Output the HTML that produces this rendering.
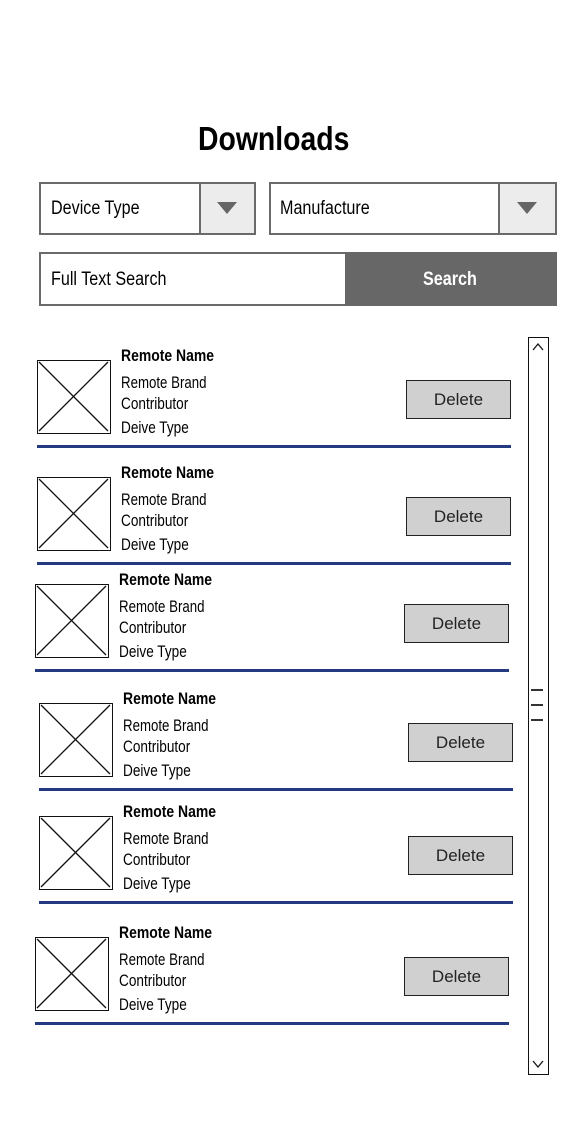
<!DOCTYPE html>
<html><head><meta charset="utf-8"><style>
*{margin:0;padding:0;box-sizing:border-box}
body{width:588px;height:1146px;background:#fff;position:relative;overflow:hidden;font-family:"Liberation Sans",sans-serif;color:#000}
.a{position:absolute}
.t{position:absolute;white-space:nowrap;transform-origin:0 0}
.img{position:absolute;width:74px;height:74px;border:1.5px solid #111}
.btn{position:absolute;width:105px;height:39px;border:1.5px solid #222;background:#d0d0d0;font-size:17px;text-align:center;line-height:37px;color:#222}
.line{position:absolute;width:474px;height:3px;background:#243a80}
</style></head><body>
<div class="t" style="left:198px;top:120px;font-size:33px;font-weight:bold;transform:scaleX(0.86)">Downloads</div>

<div class="a" style="left:39px;top:182px;width:217px;height:53px;border:2.5px solid #6a6a6a"></div>
<div class="a" style="left:199px;top:182px;width:57px;height:53px;border:2.5px solid #6a6a6a;background:#ececec"></div>
<div class="a" style="left:217px;top:202px;width:0;height:0;border-left:10px solid transparent;border-right:10px solid transparent;border-top:12px solid #666"></div>
<div class="t" style="left:51px;top:198px;font-size:19px;transform:scaleX(0.85)">Device Type</div>

<div class="a" style="left:269px;top:182px;width:288px;height:53px;border:2.5px solid #6a6a6a"></div>
<div class="a" style="left:498px;top:182px;width:59px;height:53px;border:2.5px solid #6a6a6a;background:#ececec"></div>
<div class="a" style="left:517px;top:202px;width:0;height:0;border-left:10px solid transparent;border-right:10px solid transparent;border-top:12px solid #666"></div>
<div class="t" style="left:280px;top:198px;font-size:19px;transform:scaleX(0.85)">Manufacture</div>

<div class="a" style="left:39px;top:252px;width:308px;height:54px;border:2.5px solid #6a6a6a"></div>
<div class="a" style="left:345px;top:252px;width:212px;height:54px;background:#676767"></div>
<div class="t" style="left:51px;top:269px;font-size:19px;transform:scaleX(0.85)">Full Text Search</div>
<div class="t" style="left:423px;top:269px;font-size:19px;font-weight:bold;color:#fff;transform:scaleX(0.85)">Search</div>

<div class="a" style="left:528px;top:337px;width:21px;height:738px;border:1.5px solid #111"></div>
<svg class="a" style="left:531px;top:341px" width="14" height="12"><path d="M2 9 L7 3 L12 9" fill="none" stroke="#111" stroke-width="1.3"/></svg>
<svg class="a" style="left:531px;top:1058px" width="14" height="12"><path d="M2 3 L7 9 L12 3" fill="none" stroke="#111" stroke-width="1.3"/></svg>
<div class="a" style="left:531px;top:689px;width:12px;height:1.5px;background:#333"></div>
<div class="a" style="left:531px;top:704px;width:12px;height:1.5px;background:#333"></div>
<div class="a" style="left:531px;top:719px;width:12px;height:1.5px;background:#333"></div>

<div id="rows"></div>
<script>
var offs=[[0,0],[117,0],[224,-2],[343,2],[456,2],[577,-2]];
var h='';
offs.forEach(function(o){var y=o[0],x=o[1];
h+='<div class="img" style="left:'+(37+x)+'px;top:'+(360+y)+'px"><svg width="71" height="71" style="position:absolute;left:0;top:0"><line x1="1" y1="1" x2="70" y2="70" stroke="#111" stroke-width="1.3"/><line x1="70" y1="1" x2="1" y2="70" stroke="#111" stroke-width="1.3"/></svg></div>';
h+='<div class="t" style="left:'+(121+x)+'px;top:'+(346+y)+'px;font-size:17px;font-weight:bold;transform:scaleX(0.82)">Remote Name</div>';
h+='<div class="t" style="left:'+(121+x)+'px;top:'+(373+y)+'px;font-size:17px;transform:scaleX(0.78)">Remote Brand</div>';
h+='<div class="t" style="left:'+(121+x)+'px;top:'+(394+y)+'px;font-size:17px;transform:scaleX(0.8)">Contributor</div>';
h+='<div class="t" style="left:'+(121+x)+'px;top:'+(418+y)+'px;font-size:17px;transform:scaleX(0.8)">Deive Type</div>';
h+='<div class="btn" style="left:'+(406+x)+'px;top:'+(380+y)+'px">Delete</div>';
h+='<div class="line" style="left:'+(37+x)+'px;top:'+(445+y)+'px"></div>';
});
document.getElementById('rows').innerHTML=h;
</script>
</body></html>
